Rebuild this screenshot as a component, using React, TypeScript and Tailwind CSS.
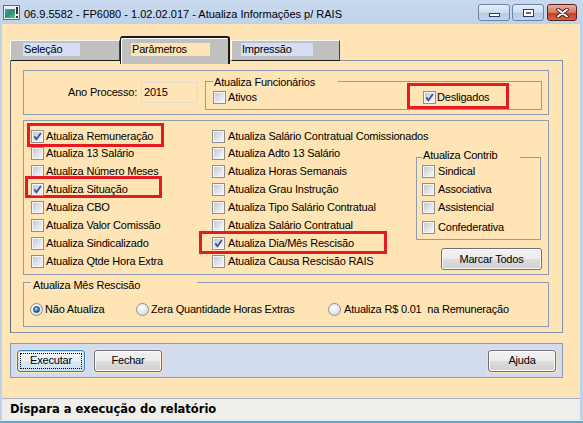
import React from "react";

function Check({ checked = false }: { checked?: boolean }) {
  return (
    <span className="relative flex h-[13px] w-[13px] shrink-0 border border-[#8e8f8f] bg-[#f6f6f6] p-[1px]">
      <span className="h-full w-full bg-[linear-gradient(135deg,#c6cad1,#f7f8f9)]" />
      {checked && (
        <svg className="absolute left-[0px] top-[0px]" width="11" height="11" viewBox="0 0 11 11">
          <path d="M2.3 5.4 L4.4 8.3 L8.9 1.9" fill="none" stroke="#3b4f9e" strokeWidth="1.8" />
        </svg>
      )}
    </span>
  );
}

function Radio({ on = false }: { on?: boolean }) {
  return (
    <span className="flex h-[13px] w-[13px] shrink-0 items-center justify-center rounded-full border border-[#8e8f8f] bg-[radial-gradient(circle_at_40%_35%,#ffffff,#cfd1d4)]">
      {on && (
        <span className="h-[7px] w-[7px] rounded-full border border-[#1b3c66] bg-[radial-gradient(circle_at_40%_35%,#a8e4ff,#2474b8_60%,#0e3a68)]" />
      )}
    </span>
  );
}

function Item({ label, checked = false }: { label: string; checked?: boolean }) {
  return (
    <>
      <Check checked={checked} />
      <span className="ml-[2px] whitespace-nowrap">{label}</span>
    </>
  );
}

function WinButton({ children, w = 68, focus = false }: { children: React.ReactNode; w?: number; focus?: boolean }) {
  return (
    <button
      className={
        focus
          ? "relative flex h-[22px] w-[68px] items-center justify-center rounded-[3px] border border-[#3c7fb1] bg-[linear-gradient(#f4f9fc_0%,#e9f2f8_50%,#d9e8f2_51%,#cfe1ee_100%)] text-[11px] text-black shadow-[0_0_0_1px_#fbe3bc,inset_0_0_0_1px_#bfe3f5]"
          : w === 68
          ? "relative flex h-[22px] w-[68px] items-center justify-center rounded-[3px] border border-[#707070] bg-[linear-gradient(#f3f3f3_0%,#ebebeb_50%,#dddddd_51%,#d0d0d0_100%)] text-[11px] text-black shadow-[0_0_0_1px_#fbe3bc,inset_0_0_0_1px_#fcfcfc]"
          : "relative flex h-[22px] w-[101px] items-center justify-center rounded-[3px] border border-[#707070] bg-[linear-gradient(#f3f3f3_0%,#ebebeb_50%,#dddddd_51%,#d0d0d0_100%)] text-[11px] text-black shadow-[inset_0_0_0_1px_#fcfcfc]"
      }
    >
      {focus && <span className="pointer-events-none absolute inset-[2px] border border-dotted border-black" />}
      {children}
    </button>
  );
}

export default function App() {
  return (
    <div className="flex h-[423px] w-[583px] flex-col overflow-hidden bg-[#bcd1ea] text-[11px] tracking-[-0.2px] text-black [font-family:'Liberation_Sans',Arial,sans-serif]">
      {/* Title bar */}
      <div className="flex h-[24px] shrink-0 items-start bg-[linear-gradient(#c9daef,#bed2ea)]">
        <svg className="ml-[3px] mt-[5px]" width="17" height="15" viewBox="0 0 17 15">
          <defs>
            <linearGradient id="ig" x1="0" y1="0" x2="1" y2="1">
              <stop offset="0" stopColor="#3aa0c8" />
              <stop offset="0.5" stopColor="#2f8f6a" />
              <stop offset="1" stopColor="#6cc08a" />
            </linearGradient>
          </defs>
          <rect x="0.5" y="0.5" width="16" height="14" fill="#eef1f4" stroke="#5f6d7d" />
          <rect x="2" y="4" width="10" height="9" fill="url(#ig)" />
          <rect x="13" y="2" width="2" height="7" fill="#26313e" />
          <rect x="13" y="11" width="2" height="2" fill="#26313e" />
        </svg>
        <div className="ml-[4px] mt-[6px] whitespace-nowrap text-[11px] tracking-[0px]">
          06.9.5582 - FP6080 - 1.02.02.017 - Atualiza Informações p/ RAIS
        </div>
        <div className="ml-auto mr-[6px] mt-[4px] flex">
          <div className="flex h-[17px] w-[32px] items-end justify-center rounded-[3px] border border-[#6c83a5] bg-[linear-gradient(#e4edf8_0%,#ccdcef_50%,#b4c9e4_51%,#c3d6ee_100%)] pb-[3px]">
            <span className="h-[4px] w-[11px] border border-[#2e3d57] bg-white" />
          </div>
          <div className="ml-[2px] flex h-[17px] w-[32px] items-center justify-center rounded-[3px] border border-[#6c83a5] bg-[linear-gradient(#e4edf8_0%,#ccdcef_50%,#b4c9e4_51%,#c3d6ee_100%)]">
            <span className="flex h-[8px] w-[11px] items-center justify-center border border-[#2e3d57] bg-white">
              <span className="h-[2px] w-[5px] bg-[#5a6a82]" />
            </span>
          </div>
          <div className="ml-[3px] flex h-[17px] w-[30px] items-center justify-center rounded-[3px] border border-[#5b2018] bg-[linear-gradient(#eab0a2_0%,#d9775f_50%,#c43b22_51%,#d6654b_100%)]">
            <svg width="13" height="10" viewBox="0 0 13 10">
              <path d="M2 1.5 L11 8.5 M11 1.5 L2 8.5" stroke="#3a1410" strokeWidth="3.6" strokeLinecap="round" />
              <path d="M2 1.5 L11 8.5 M11 1.5 L2 8.5" stroke="#ffffff" strokeWidth="2" strokeLinecap="round" />
            </svg>
          </div>
        </div>
      </div>

      {/* Body */}
      <div className="ml-[2px] mr-[3px] flex flex-1 flex-col bg-[#ffe4b5]">
        <div className="flex flex-col pl-[8px] pt-[12px]">
          {/* Tabs */}
          <div className="relative z-10 mb-[-4px] flex h-[28px] items-end">
            <div className="mb-[3px] h-[21px] w-[110px] border-b border-l border-r border-t border-b-[#1a1a1a] border-l-white border-r-[#404040] border-t-[#f4f4f4] bg-[#c0c0c0] pl-[12px] pt-[2px]">
              <div className="h-[13px] w-[57px] bg-[#d5def5] pl-[1px] leading-[13px]">Seleção</div>
            </div>
            <div className="h-[28px] w-[110px] rounded-t-[3px] border-l border-r-2 border-t-2 border-[#1a1a1a] bg-[#c0c0c0] pl-[10px] pt-[5px] shadow-[inset_1px_1px_0_#ffffff]">
              <div className="h-[13px] w-[79px] bg-[#ffe4b5] pl-[1px] leading-[13px]">Parâmetros</div>
            </div>
            <div className="mb-[3px] ml-[1px] h-[21px] w-[109px] border-b border-l border-r border-t border-b-[#1a1a1a] border-l-white border-r-[#404040] border-t-[#f4f4f4] bg-[#c0c0c0] pl-[9px] pt-[2px]">
              <div className="h-[13px] w-[72px] bg-[#d5def5] pl-[1px] leading-[13px]">Impressão</div>
            </div>
          </div>

          {/* Tab panel */}
          <div className="flex h-[273px] w-[553px] flex-col border border-[#8592a8] border-l-[#5c6474] pl-[12px] pt-[9px]">
            {/* Group 1 */}
            <div className="flex h-[45px] w-[526px] border border-[#8f9bb3]">
              <div className="mt-[11px] flex h-[21px] w-[113px] items-center justify-end">Ano Processo:</div>
              <div className="ml-[4px] mt-[11px] flex h-[21px] w-[57px] items-center border border-[#e0ddd6] pl-[2px]">2015</div>
              <div className="relative ml-[7px] mt-[10px] flex h-[29px] w-[337px] border border-[#8f9bb3] pl-[7px] pt-[9px]">
                <span className="absolute left-[7px] top-[-6px] w-[125px] bg-[#ffe4b5] pl-[1px] leading-[13px]">Atualiza Funcionários</span>
                <div className="flex h-[13px] w-[210px] items-center">
                  <Item label="Ativos" />
                </div>
                <div className="relative flex h-[13px] items-center">
                  <span className="pointer-events-none absolute left-[-16px] top-[-8px] h-[26px] w-[102px] border-[3px] border-[#e31b23]" />
                  <Check checked />
                  <span className="ml-[1px] whitespace-nowrap">Desligados</span>
                </div>
              </div>
            </div>

            {/* Group 2 */}
            <div className="mt-[5px] flex h-[155px] w-[526px] border border-[#8f9bb3]">
              <div className="flex w-[188px] flex-col pl-[7px] pt-[6px]">
                <div className="relative flex h-[18px] items-center">
                  <span className="pointer-events-none absolute left-[-4px] top-[-4px] h-[24px] w-[137px] border-[3px] border-[#e31b23]" />
                  <Item label="Atualiza Remuneração" checked />
                </div>
                <div className="flex h-[17px] items-center"><Item label="Atualiza 13 Salário" /></div>
                <div className="flex h-[18px] items-center"><Item label="Atualiza Número Meses" /></div>
                <div className="relative flex h-[18px] items-center">
                  <span className="pointer-events-none absolute left-[-6px] top-[-4px] h-[22px] w-[137px] border-[3px] border-[#e31b23]" />
                  <Item label="Atualiza Situação" checked />
                </div>
                <div className="flex h-[18px] items-center"><Item label="Atualiza CBO" /></div>
                <div className="flex h-[18px] items-center"><Item label="Atualiza Valor Comissão" /></div>
                <div className="flex h-[18px] items-center"><Item label="Atualiza Sindicalizado" /></div>
                <div className="flex h-[18px] items-center"><Item label="Atualiza Qtde Hora Extra" /></div>
              </div>
              <div className="flex w-[204px] flex-col pt-[6px]">
                <div className="flex h-[18px] items-center"><Check /><span className="ml-[3px] whitespace-nowrap">Atualiza Salário Contratual Comissionados</span></div>
                <div className="flex h-[17px] items-center"><Check /><span className="ml-[3px] whitespace-nowrap">Atualiza Adto 13 Salário</span></div>
                <div className="flex h-[18px] items-center"><Check /><span className="ml-[3px] whitespace-nowrap">Atualiza Horas Semanais</span></div>
                <div className="flex h-[18px] items-center"><Check /><span className="ml-[3px] whitespace-nowrap">Atualiza Grau Instrução</span></div>
                <div className="flex h-[18px] items-center"><Check /><span className="ml-[3px] whitespace-nowrap">Atualiza Tipo Salário Contratual</span></div>
                <div className="flex h-[18px] items-center"><Check /><span className="ml-[3px] whitespace-nowrap">Atualiza Salário Contratual</span></div>
                <div className="relative flex h-[18px] items-center">
                  <span className="pointer-events-none absolute left-[-13px] top-[-3px] h-[23px] w-[188px] border-[3px] border-[#e31b23]" />
                  <Check checked /><span className="ml-[3px] whitespace-nowrap">Atualiza Dia/Mês Rescisão</span>
                </div>
                <div className="flex h-[18px] items-center"><Check /><span className="ml-[3px] whitespace-nowrap">Atualiza Causa Rescisão RAIS</span></div>
              </div>
              <div className="flex w-[126px] flex-col">
                <div className="relative mt-[36px] flex h-[83px] w-[125px] flex-col border border-[#8f9bb3] pl-[5px] pt-[4px]">
                  <span className="absolute left-[5px] top-[-9px] w-[98px] bg-[#ffe4b5] pl-[1px] leading-[13px]">Atualiza Contrib</span>
                  <div className="flex h-[18px] items-center"><Check /><span className="ml-[3px]">Sindical</span></div>
                  <div className="flex h-[18px] items-center"><Check /><span className="ml-[3px]">Associativa</span></div>
                  <div className="flex h-[18px] items-center"><Check /><span className="ml-[3px]">Assistencial</span></div>
                  <div className="mt-[2px] flex h-[18px] items-center"><Check /><span className="ml-[3px]">Confederativa</span></div>
                </div>
                <div className="ml-[25px] mt-[8px]">
                  <WinButton w={101}>Marcar Todos</WinButton>
                </div>
              </div>
            </div>

            {/* Group 3 */}
            <div className="relative mt-[7px] flex h-[45px] w-[526px] border border-[#8f9bb3] pl-[6px] pt-[19px]">
              <span className="absolute left-[7px] top-[-4px] w-[166px] bg-[#ffe4b5] pl-[2px] leading-[13px]">Atualiza Mês Rescisão</span>
              <div className="flex h-[14px] w-[106px] items-center"><Radio on /><span className="ml-[2px] whitespace-nowrap">Não Atualiza</span></div>
              <div className="flex h-[14px] w-[192px] items-center"><Radio /><span className="ml-[2px] whitespace-nowrap">Zera Quantidade Horas Extras</span></div>
              <div className="flex h-[14px] items-center"><Radio /><span className="ml-[3px] whitespace-pre">Atualiza R$ 0.01  na Remuneração</span></div>
            </div>
          </div>

          {/* Button bar */}
          <div className="mt-[10px] flex h-[35px] w-[553px] items-center border border-[#8c9ab2] bg-[#d3dcee] pl-[6px] pr-[6px]">
            <WinButton focus>Executar</WinButton>
            <div className="ml-[9px]"><WinButton>Fechar</WinButton></div>
            <div className="ml-auto"><WinButton>Ajuda</WinButton></div>
          </div>
        </div>
        <div className="flex-1" />
        {/* Status bar */}
        <div className="flex h-[22px] items-center border-t border-[#a7b0bd] bg-[#f0eeea] pl-[8px] text-[11.5px] font-bold tracking-[0px] [font-family:'DejaVu_Sans',Verdana,sans-serif]">
          Dispara a execução do relatório
        </div>
      </div>
      <div className="h-[3px] shrink-0 border-t border-[#e6ecf3] bg-[#5fa8c8]" />
    </div>
  );
}
